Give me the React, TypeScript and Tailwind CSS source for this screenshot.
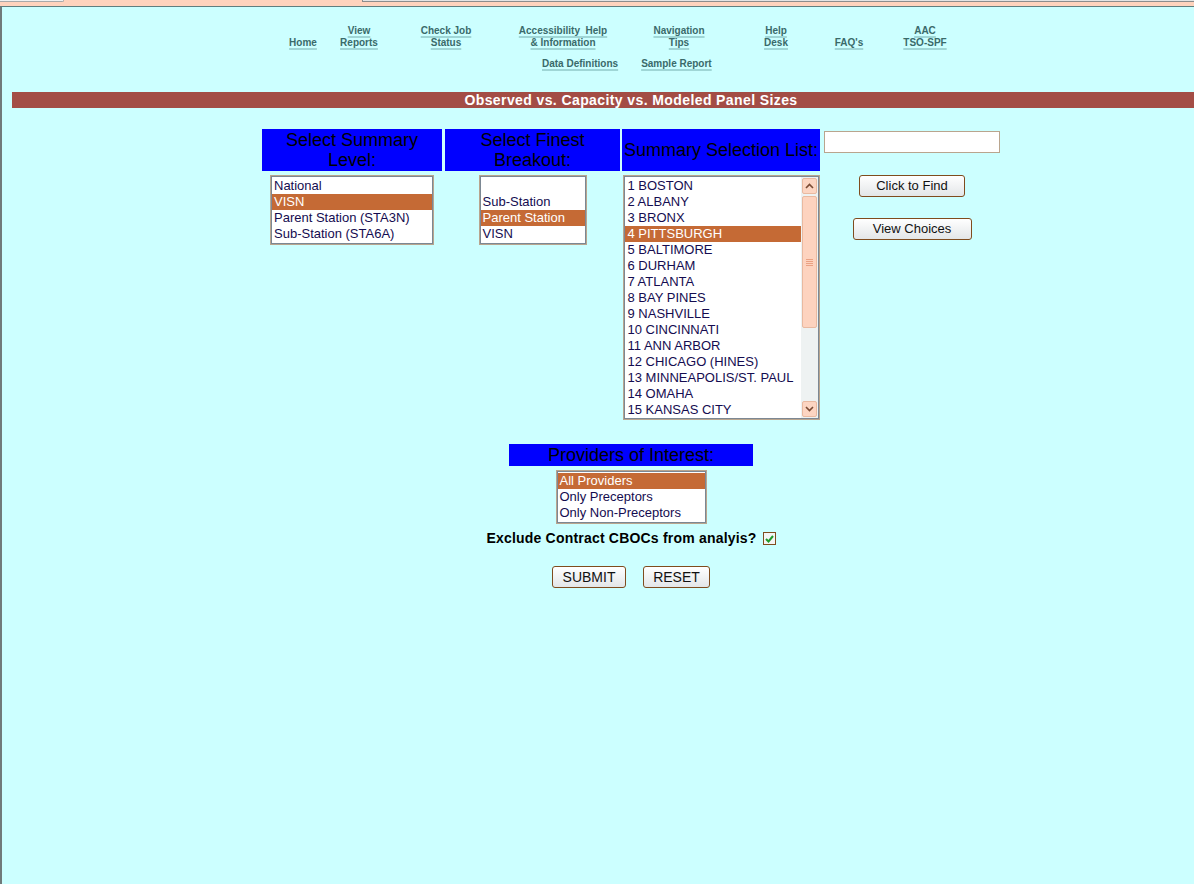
import React from "react";

const font = { fontFamily: '"Liberation Sans", Arial, sans-serif' };

const navTop = [
  { w: "w-[56px]", l1: "", l2: "Home" },
  { w: "w-[56px]", l1: "View", l2: "Reports" },
  { w: "w-[118px]", l1: "Check Job", l2: "Status" },
  { w: "w-[116px]", l1: "Accessibility  Help", l2: "& Information" },
  { w: "w-[116px]", l1: "Navigation", l2: "Tips" },
  { w: "w-[78px]", l1: "Help", l2: "Desk" },
  { w: "w-[68px]", l1: "", l2: "FAQ's" },
  { w: "w-[84px]", l1: "AAC", l2: "TSO-SPF" },
];

const stations = [
  "1 BOSTON",
  "2 ALBANY",
  "3 BRONX",
  "4 PITTSBURGH",
  "5 BALTIMORE",
  "6 DURHAM",
  "7 ATLANTA",
  "8 BAY PINES",
  "9 NASHVILLE",
  "10 CINCINNATI",
  "11 ANN ARBOR",
  "12 CHICAGO (HINES)",
  "13 MINNEAPOLIS/ST. PAUL",
  "14 OMAHA",
  "15 KANSAS CITY",
];

function NavLink({ children }: { children: React.ReactNode }) {
  return (
    <span className="underline decoration-[#9fd6d6] decoration-2 underline-offset-2 whitespace-pre">
      {children}
    </span>
  );
}

function ListBox({
  items,
  selected,
  className,
}: {
  items: string[];
  selected: number;
  className: string;
}) {
  return (
    <div className={`border border-[#b9a58e] bg-white ${className}`}>
      <div className="border border-[#7c8894] py-px">
        {items.map((it, i) => (
          <div
            key={i}
            className={`h-4 px-[2px] text-[13px] leading-4 whitespace-nowrap ${
              i === selected ? "bg-[#c56a35] text-white" : "text-[#140c50]"
            }`}
          >
            {it || "\u00a0"}
          </div>
        ))}
      </div>
    </div>
  );
}

function Btn({ children, className }: { children: React.ReactNode; className: string }) {
  return (
    <button
      className={`h-[22px] rounded-[3px] border border-[#7f4c1e] bg-gradient-to-b from-white to-[#e3e6e8] text-[13px] text-[#111] ${className}`}
    >
      {children}
    </button>
  );
}

export default function App() {
  return (
    <div className="min-h-[884px] bg-[#ccffff]" style={font}>
      {/* browser chrome strip */}
      <div className="relative h-[6px] bg-[#ffd3bd]">
        <div className="absolute left-0 top-0 h-[2px] w-[64px] rounded-br-sm border-b border-r border-[#a9a9a9] bg-[#f1f1f1]" />
        <div className="absolute left-[362px] top-0 h-[2px] w-[832px] border-b border-l border-[#8c8c8c] bg-[#e4e4e4]" />
      </div>
      <div className="h-px bg-[#5f7f7f]" />

      <div className="min-h-[877px] border-l-2 border-[#707a7a]">
        {/* nav */}
        <div className="flex pl-[273px] pt-[18px] text-[10px] font-bold text-[#3a6a6a] leading-[12px]">
          {navTop.map((n, i) => (
            <div key={i} className={`${n.w} flex flex-col items-center text-center`}>
              <div className="h-[12px]">{n.l1 && <NavLink>{n.l1}</NavLink>}</div>
              <div>
                <NavLink>{n.l2}</NavLink>
              </div>
            </div>
          ))}
        </div>
        <div className="flex pl-[540px] pt-[9px] text-[10px] font-bold text-[#3a6a6a] leading-[12px]">
          <NavLink>Data Definitions</NavLink>
          <span className="ml-[23px]">
            <NavLink>Sample Report</NavLink>
          </span>
        </div>

        {/* title bar */}
        <div className="ml-[10px] mt-[22px] flex h-[16px] items-center justify-center bg-[#a34d45] pl-[56px] text-[14px] font-bold tracking-[0.4px] text-white">
          Observed vs. Capacity vs. Modeled Panel Sizes
        </div>

        {/* selection table */}
        <div className="ml-[260px] mt-[21px] flex">
          <div className="flex w-[180px] flex-col items-center">
            <div className="flex h-[42px] w-full flex-col items-center justify-center bg-[#0000ff] text-[18px] leading-[20px] text-black">
              <span>Select Summary</span>
              <span>Level:</span>
            </div>
            <ListBox
              className="mt-[4px] w-[164px]"
              items={["National", "VISN", "Parent Station (STA3N)", "Sub-Station (STA6A)"]}
              selected={1}
            />
          </div>
          <div className="ml-[3px] flex w-[175px] flex-col items-center">
            <div className="flex h-[42px] w-full flex-col items-center justify-center bg-[#0000ff] text-[18px] leading-[20px] text-black">
              <span>Select Finest</span>
              <span>Breakout:</span>
            </div>
            <ListBox
              className="mt-[4px] w-[108px]"
              items={["", "Sub-Station", "Parent Station", "VISN"]}
              selected={2}
            />
          </div>
          <div className="ml-[2px] flex w-[198px] flex-col items-center">
            <div className="flex h-[42px] w-full items-center justify-center bg-[#0000ff] text-[18px] leading-[20px] text-black">
              Summary Selection List:
            </div>
            <div className="mt-[4px] flex h-[245px] w-[197px] border border-[#b9a58e] bg-white">
              <div className="flex flex-1 border border-[#7c8894]">
                <div className="flex-1 overflow-hidden py-px">
                  {stations.map((s, i) => (
                    <div
                      key={i}
                      className={`h-4 px-[3px] text-[13px] leading-4 whitespace-nowrap ${
                        i === 3 ? "bg-[#c56a35] text-white" : "text-[#140c50]"
                      }`}
                    >
                      {s}
                    </div>
                  ))}
                </div>
                {/* scrollbar */}
                <div className="flex w-[17px] flex-col bg-[#eef2f2] p-px">
                  <div className="flex h-[16px] items-center justify-center rounded-[2px] border border-[#e9b9a0] bg-[#fcd5c2]">
                    <svg width="9" height="6" viewBox="0 0 9 6">
                      <path d="M1 5 L4.5 1.5 L8 5" fill="none" stroke="#7a4a33" strokeWidth="1.6" />
                    </svg>
                  </div>
                  <div className="mt-[2px] flex h-[132px] items-center justify-center rounded-[2px] border border-[#e9b9a0] bg-[#fdd3bf]">
                    <div className="flex w-[7px] flex-col gap-[1px]">
                      <div className="h-px bg-[#eaa183]" />
                      <div className="h-px bg-[#eaa183]" />
                      <div className="h-px bg-[#eaa183]" />
                      <div className="h-px bg-[#eaa183]" />
                    </div>
                  </div>
                  <div className="flex-1" />
                  <div className="flex h-[16px] items-center justify-center rounded-[2px] border border-[#e9b9a0] bg-[#fcd5c2]">
                    <svg width="9" height="6" viewBox="0 0 9 6">
                      <path d="M1 1 L4.5 4.5 L8 1" fill="none" stroke="#7a4a33" strokeWidth="1.6" />
                    </svg>
                  </div>
                </div>
              </div>
            </div>
          </div>
          <div className="ml-[2px] flex w-[180px] flex-col items-center">
            <div className="mt-[2px] h-[22px] w-[176px] border border-[#b9a58e] bg-white" />
            <Btn className="mt-[22px] w-[106px]">Click to Find</Btn>
            <Btn className="mt-[21px] w-[119px]">View Choices</Btn>
          </div>
        </div>

        {/* providers */}
        <div className="mt-[24px] flex flex-col items-center pl-[66px]">
          <div className="flex h-[22px] w-[244px] items-center justify-center bg-[#0000ff] text-[18px] text-black">
            Providers of Interest:
          </div>
          <ListBox
            className="mt-[4px] w-[151px]"
            items={["All Providers", "Only Preceptors", "Only Non-Preceptors"]}
            selected={0}
          />
          <div className="mt-[4px] flex items-center text-[14px] font-bold tracking-[0.2px] text-black">
            <span>Exclude Contract CBOCs from analyis?</span>
            <span className="ml-[6px] flex h-[13px] w-[13px] items-center justify-center border border-[#7f4c1e] bg-[#f4f4f4]">
              <svg width="9" height="8" viewBox="0 0 9 8">
                <path d="M1 4 L3.5 6.5 L8 1" fill="none" stroke="#1f9a2a" strokeWidth="2" />
              </svg>
            </span>
          </div>
          <div className="mt-[17px] flex">
            <Btn className="w-[74px] text-[14px]">SUBMIT</Btn>
            <Btn className="ml-[17px] w-[67px] text-[14px]">RESET</Btn>
          </div>
        </div>
      </div>
    </div>
  );
}
